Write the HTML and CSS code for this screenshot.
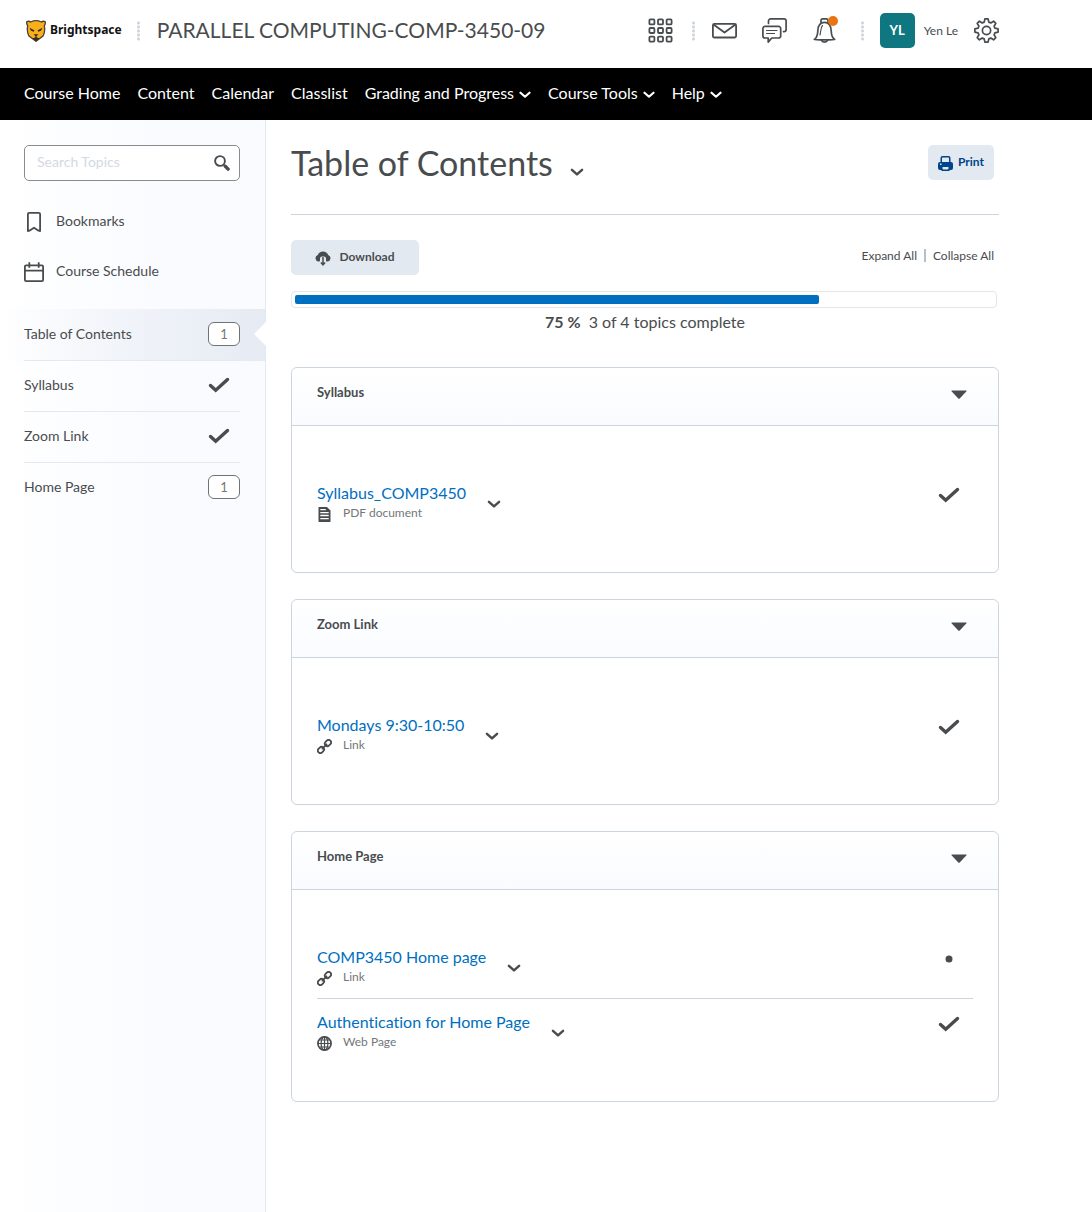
FILE: index.html
```html
<!DOCTYPE html>
<html lang="en">
<head>
<meta charset="utf-8">
<meta name="viewport" content="width=device-width, initial-scale=1">
<title>Table of Contents - PARALLEL COMPUTING-COMP-3450-09</title>
<link rel="stylesheet" href="styles.css">
</head>
<body>
<svg class="defs" aria-hidden="true">
  <symbol id="chevron" viewBox="0 0 12 8"><path d="M1.500 1.700 6 5.700l4.500-4" fill="none" stroke="currentColor" stroke-width="2.200" stroke-linecap="round" stroke-linejoin="round"/></symbol>
  <symbol id="check" viewBox="0 0 22 16"><path d="M2.500 8.500 7.700 13.200 19.500 2.500" fill="none" stroke="currentColor" stroke-width="3.400" stroke-linecap="round" stroke-linejoin="miter"/></symbol>
  <symbol id="caret" viewBox="0 0 16 10"><path d="M1.200.5h13.600c.8 0 1 .6.5 1.100L8.700 8.500a1 1 0 0 1-1.400 0L.7 1.600C.2 1.100.4.500 1.200.5Z" fill="currentColor"/></symbol>
  <symbol id="link" viewBox="0 0 16 16"><g fill="none" stroke="currentColor" stroke-width="1.900"><rect x="-3.600" y="-2.700" width="7.200" height="5.400" rx="2.700" transform="translate(4.200 11.700) rotate(-45)"/><rect x="-3.600" y="-2.700" width="7.200" height="5.400" rx="2.700" transform="translate(11.700 4.300) rotate(-45)"/><path d="M5.800 10.200l4.400-4.400" stroke-linecap="round"/></g></symbol>
</svg>

<header class="topbar">
  <div class="wrap topbar-row">
    <a class="brand" href="#">
      <svg width="20" height="22" viewBox="0 0 20 22" aria-hidden="true"><path d="M.7 1.800C2 1 3.500 1.200 4.800 2 8 .4 12 .4 15.200 2c1.300-.8 2.800-1 4.100-.2.2 1.700-.3 3-1 4 .8 4 .4 7.500-1.300 10.300L10 21.300 3 16.100C1.300 13.300.9 9.800 1.700 5.800c-.7-1-1.200-2.300-1-4Z" fill="#f9af1b" stroke="#4c4034" stroke-width="1.300"/><path d="M3.500 7.800 8.300 10.200l-.5 1.500C5.800 11.500 4.300 10.500 3.500 7.800ZM16.500 7.800 11.700 10.200l.5 1.500c2-.2 3.500-1.200 4.300-3.900ZM7.600 14.300h4.800L10 16.700ZM6.500 18.300 10 17.300l3.500 1L10 20.900Z" fill="#33291f"/><path d="M10 16v2" stroke="#33291f"/></svg>
      <span>Brightspace</span>
    </a>
    <span class="dots"></span>
    <a class="course" href="#">PARALLEL COMPUTING-COMP-3450-09</a>
    <div class="tools">
      <button type="button" class="icon" aria-label="Select a course"><svg width="25" height="25" viewBox="0 0 25 25" fill="none" stroke="currentColor" stroke-width="1.800"><rect x="1.400" y="1.400" width="5" height="5" rx="1"/><rect x="10" y="1.400" width="5" height="5" rx="1"/><rect x="18.600" y="1.400" width="5" height="5" rx="1"/><rect x="1.400" y="10" width="5" height="5" rx="1"/><rect x="10" y="10" width="5" height="5" rx="1"/><rect x="18.600" y="10" width="5" height="5" rx="1"/><rect x="1.400" y="18.600" width="5" height="5" rx="1"/><rect x="10" y="18.600" width="5" height="5" rx="1"/><rect x="18.600" y="18.600" width="5" height="5" rx="1"/></svg></button>
      <span class="dots"></span>
      <div class="alerts">
        <button type="button" class="icon" aria-label="Email"><svg width="25" height="25" viewBox="0 0 25 25" fill="none" stroke="currentColor" stroke-width="1.800" stroke-linejoin="round"><rect x=".9" y="5.900" width="23.200" height="13.600" rx="1.500"/><path d="M1.500 6.500 12.500 14.500 23.500 6.500"/></svg></button>
        <button type="button" class="icon" aria-label="Subscription alerts"><svg width="25" height="25" viewBox="0 0 25 25" fill="none" stroke="currentColor" stroke-width="1.700" stroke-linejoin="round" stroke-linecap="round"><path d="M6.500 5.500V3A2.100 2.100 0 0 1 8.600.9H22A2.100 2.100 0 0 1 24.100 3v8.500a2.100 2.100 0 0 1-2.100 2.100h-.5"/><path d="M3 8.400h13.600a2.100 2.100 0 0 1 2.100 2.100v7.400a2.100 2.100 0 0 1-2.100 2.100H9.700L6.200 24.100V20H3A2.100 2.100 0 0 1 .9 17.900v-7.400A2.100 2.100 0 0 1 3 8.400Z"/><path d="M4.500 12.500h10.500M4.500 15.500h8" stroke-width="1.200"/></svg></button>
        <button type="button" class="icon" aria-label="Update alerts"><svg width="25" height="25" viewBox="0 0 25 25" fill="none" stroke="currentColor" stroke-width="1.700" stroke-linejoin="round" stroke-linecap="round"><path d="M2.300 21.500c2.400-1.600 3.300-4 3.500-8.500C6 7.500 8.300 4.300 12.500 4.300s6.500 3.200 6.700 8.700c.2 4.500 1.100 6.900 3.500 8.500-.5.600-19.900.6-20.400 0Z"/><path d="M9 4.900V2.500A1.600 1.600 0 0 1 10.600.9h3.800A1.600 1.600 0 0 1 16 2.500v2.400M9.500 22.300c.7 2.400 5.300 2.400 6 0"/><path d="M10.500 7.500C8.600 9.500 8.900 13.500 8 17" stroke-width="1.100"/></svg><span class="unread"></span></button>
      </div>
      <span class="dots"></span>
      <button type="button" class="user"><span class="avatar">YL</span><span>Yen Le</span></button>
      <button type="button" class="icon" aria-label="Settings"><svg width="25" height="25" viewBox="0 0 25 25" fill="none" stroke="currentColor" stroke-width="1.700" stroke-linejoin="round"><path d="M10.900.9h3.200l.7 3.200 2 .8 2.800-1.700 2.200 2.200-1.700 2.800.8 2 3.200.7v3.200l-3.200.7-.8 2 1.700 2.800-2.200 2.200-2.800-1.700-2 .8-.7 3.200h-3.200l-.7-3.200-2-.8-2.800 1.700-2.200-2.200 1.700-2.800-.8-2-3.200-.7v-3.200l3.200-.7.8-2-1.700-2.800 2.200-2.200 2.800 1.700 2-.8Z"/><circle cx="12.500" cy="12.500" r="4.100"/></svg></button>
    </div>
  </div>
</header>

<nav class="navbar" aria-label="Course">
  <div class="wrap navbar-row">
    <a href="#">Course Home</a>
    <a href="#">Content</a>
    <a href="#">Calendar</a>
    <a href="#">Classlist</a>
    <button type="button">Grading and Progress <svg width="12" height="8"><use href="#chevron"/></svg></button>
    <button type="button">Course Tools <svg width="12" height="8"><use href="#chevron"/></svg></button>
    <button type="button">Help <svg width="12" height="8"><use href="#chevron"/></svg></button>
  </div>
</nav>

<div class="layout">
  <aside class="sidebar">
    <form class="search" role="search">
      <input type="text" placeholder="Search Topics" aria-label="Search Topics">
      <button type="submit" aria-label="Search"><svg width="16" height="16" viewBox="0 0 16 16" fill="none" stroke="currentColor"><circle cx="6" cy="6" r="4.900" stroke-width="1.900"/><path d="M10 10l1.500 1.500" stroke-width="2"/><path d="M11.300 11.300l2.800 2.800" stroke-width="3.400" stroke-linecap="round"/></svg></button>
    </form>
    <ul class="shortcuts">
      <li><a href="#"><svg width="20" height="20" viewBox="0 0 20 20" fill="none" stroke="currentColor" stroke-width="1.800" stroke-linejoin="round"><path d="M3.900 19V2A1.200 1.200 0 0 1 5.100.9h9.800A1.200 1.200 0 0 1 16.100 2v17l-1.500-.3L10 15.700 5.400 18.700Z"/></svg><span>Bookmarks</span></a></li>
      <li><a href="#"><svg width="20" height="20" viewBox="0 0 20 20" fill="none" stroke="currentColor" stroke-width="1.800"><rect x=".9" y="3.400" width="18.200" height="15.700" rx="1.200"/><path d="M1 8.700h18M5.300.3v5.400M14.700.3v5.400"/></svg><span>Course Schedule</span></a></li>
    </ul>
    <ul class="modules">
      <li class="active"><a href="#">Table of Contents <span class="count">1</span></a></li>
      <li><a href="#">Syllabus <svg width="22" height="16"><use href="#check"/></svg></a></li>
      <li><a href="#">Zoom Link <svg width="22" height="16"><use href="#check"/></svg></a></li>
      <li><a href="#">Home Page <span class="count">1</span></a></li>
    </ul>
  </aside>

  <main class="content">
    <div class="heading">
      <h1>Table of Contents</h1>
      <button type="button" class="menu" aria-label="Table of Contents actions"><svg width="14" height="9"><use href="#chevron"/></svg></button>
      <button type="button" class="btn print"><svg width="15" height="15" viewBox="0 0 15 15"><path d="M2.500 6V2A2 2 0 0 1 4.500 0h6a2 2 0 0 1 2 2v4h.5a2 2 0 0 1 2 2v4a2 2 0 0 1-2 2h-1a2 2 0 0 1-2 1h-5a2 2 0 0 1-2-1H2a2 2 0 0 1-2-2V8a2 2 0 0 1 2-2Z" fill="currentColor"/><path d="M4 6V2.200q0-.7.700-.7h5.600q.7 0 .7.700V6ZM4.500 11h6v1.500q0 1-1 1h-4q-1 0-1-1ZM2 7.500h1.500V9H2Z" fill="#e3e9f1"/></svg>Print</button>
    </div>

    <div class="actions">
      <button type="button" class="btn download"><svg width="16" height="15" viewBox="0 0 16 15"><path d="M3.500 10.500a3.400 3.400 0 0 1-.7-6.600C3.600 1.600 5.500.4 8 .4s4.400 1.200 5.200 3.500a3.400 3.400 0 0 1-.7 6.600H12c-.8 0-1-.5-1-1V7.500a2 2 0 0 0-2-2H7a2 2 0 0 0-2 2v2c0 .5-.2 1-1 1Z" fill="currentColor"/><path d="M8 6v7M5.900 11.500 8 13.800l2.100-2.300" fill="none" stroke="currentColor" stroke-width="1.500"/></svg>Download</button>
      <div class="toggle-all"><a href="#">Expand All</a><a href="#">Collapse All</a></div>
    </div>

    <div class="progress" role="progressbar" aria-valuenow="75" aria-valuemin="0" aria-valuemax="100" aria-label="Topics complete"><span style="width:75%"></span></div>
    <p class="summary"><strong>75 %</strong> 3 of 4 topics complete</p>

    <section class="card">
      <h2>Syllabus <button type="button" aria-label="Collapse Syllabus"><svg width="16" height="10"><use href="#caret"/></svg></button></h2>
      <ul>
        <li>
          <div class="topic"><a href="#">Syllabus_COMP3450</a><small><svg width="15" height="15" viewBox="0 0 15 15"><path d="M2.500 0h7.500l3.500 3.500V14.500a.5.500 0 0 1-.5.500H2a.5.500 0 0 1-.5-.5V.5a.5.500 0 0 1 .5-.5Z" fill="currentColor"/><path d="M3.300 2.700h5.500M3.300 5.600h8.400M3.300 8.500h8.400M3.300 11.700h8.400" stroke="#fff" stroke-width="1.300"/></svg>PDF document</small></div>
          <button type="button" class="menu" aria-label="Actions for Syllabus_COMP3450"><svg width="14" height="9"><use href="#chevron"/></svg></button>
          <svg class="status" width="22" height="16" role="img" aria-label="Completed"><use href="#check"/></svg>
        </li>
      </ul>
    </section>

    <section class="card">
      <h2>Zoom Link <button type="button" aria-label="Collapse Zoom Link"><svg width="16" height="10"><use href="#caret"/></svg></button></h2>
      <ul>
        <li>
          <div class="topic"><a href="#">Mondays 9:30-10:50</a><small><svg width="15" height="15"><use href="#link"/></svg>Link</small></div>
          <button type="button" class="menu" aria-label="Actions for Mondays 9:30-10:50"><svg width="14" height="9"><use href="#chevron"/></svg></button>
          <svg class="status" width="22" height="16" role="img" aria-label="Completed"><use href="#check"/></svg>
        </li>
      </ul>
    </section>

    <section class="card">
      <h2>Home Page <button type="button" aria-label="Collapse Home Page"><svg width="16" height="10"><use href="#caret"/></svg></button></h2>
      <ul>
        <li>
          <div class="topic"><a href="#">COMP3450 Home page</a><small><svg width="15" height="15"><use href="#link"/></svg>Link</small></div>
          <button type="button" class="menu" aria-label="Actions for COMP3450 Home page"><svg width="14" height="9"><use href="#chevron"/></svg></button>
          <svg class="status" width="22" height="16" viewBox="0 0 22 16" role="img" aria-label="Not completed"><circle cx="11" cy="8" r="3.500" fill="currentColor"/></svg>
        </li>
        <li>
          <div class="topic"><a href="#">Authentication for Home Page</a><small><svg width="15" height="15" viewBox="0 0 15 15" fill="none" stroke="currentColor" stroke-width="1.200"><circle cx="7.500" cy="7.500" r="6.600" stroke-width="1.700"/><ellipse cx="7.500" cy="7.500" rx="3.400" ry="6.600"/><path d="M7.500 1v13M1 7.500h13M2.500 4h10M2.500 11h10"/></svg>Web Page</small></div>
          <button type="button" class="menu" aria-label="Actions for Authentication for Home Page"><svg width="14" height="9"><use href="#chevron"/></svg></button>
          <svg class="status" width="22" height="16" role="img" aria-label="Completed"><use href="#check"/></svg>
        </li>
      </ul>
    </section>
  </main>
</div>
</body>
</html>
```
FILE: styles.css
```css
* { box-sizing: border-box; }

body {
  display: flex;
  flex-direction: column;
  min-height: 100vh;
  margin: 0;
  background: #fff;
  color: #494c4e;
  font: 14px/20px Lato, "Liberation Sans", sans-serif;
  font-variant-ligatures: none;
}

a { color: inherit; text-decoration: none; }
ul { margin: 0; padding: 0; list-style: none; }
svg { display: block; flex: none; }
button {
  padding: 0;
  border: 0;
  background: none;
  color: inherit;
  font: inherit;
  cursor: pointer;
}
.defs { position: absolute; width: 0; height: 0; }
.wrap { padding: 0 93px 0 24px; }

/* Top bar */
.topbar-row { display: flex; align-items: center; height: 68px; padding-bottom: 7px; }
.brand {
  display: flex;
  align-items: center;
  gap: 4px;
  margin: 0 15px 0 2px;
  color: #111;
  font: bold 12px/20px "Noto Sans", sans-serif;
}
.brand span { padding-bottom: 2px; }
.dots {
  width: 3px;
  height: 20px;
  background: radial-gradient(circle, #cdd5dc 1px, transparent 2px) 0 0 / 3px 4px;
}
.course { margin-left: 17px; padding-bottom: 2px; font-size: 21px; line-height: 26px; white-space: nowrap; }
.tools { display: flex; align-items: center; margin-left: auto; }
.tools .dots { margin: 0 17px 0 19px; }
.alerts { display: flex; gap: 25px; }
.tools .alerts + .dots { margin: 0 16px 0 24px; }
.icon { position: relative; width: 25px; height: 25px; }
.unread {
  position: absolute;
  top: -2px;
  right: -1px;
  width: 10px;
  height: 10px;
  border-radius: 50%;
  background: #e87511;
}
.user { display: flex; align-items: center; gap: 9px; margin-right: 16px; font-size: 12px; white-space: nowrap; }
.avatar {
  width: 35px;
  border-radius: 5px;
  background: #0f7780;
  color: #fff;
  font-size: 13px;
  font-weight: bold;
  line-height: 35px;
}

/* Course navigation */
.navbar { background: #000; color: #fff; }
.navbar-row {
  display: flex;
  align-items: center;
  gap: 17px;
  height: 52px;
  padding-bottom: 2px;
  font-size: 16px;
  white-space: nowrap;
}
.navbar button { display: flex; align-items: center; gap: 5px; }
.navbar svg { margin-top: 4px; }

/* Sidebar */
.layout { display: flex; flex: 1; }
.sidebar {
  flex: none;
  width: 266px;
  padding: 25px 25px 25px 24px;
  border-right: 1px solid #e3e9f1;
  background: linear-gradient(to right, #fff, #f9fbff 60%);
}
.search {
  display: flex;
  align-items: center;
  height: 36px;
  padding: 0 9px 0 12px;
  border: 1px solid #868c8f;
  border-radius: 5px;
  background: #fff;
}
.search input {
  flex: 1;
  min-width: 0;
  padding: 0 0 2px;
  border: 0;
  outline: 0;
  background: none;
  color: inherit;
  font: inherit;
}
.search input::placeholder { color: #d3d9e3; opacity: 1; }
.shortcuts { margin: 16px 0 12px; }
.shortcuts a { display: flex; align-items: center; gap: 12px; height: 50px; }
.shortcuts span { padding-bottom: 2px; }
.modules a {
  display: flex;
  align-items: center;
  justify-content: space-between;
  height: 51px;
  padding-bottom: 2px;
  border-bottom: 1px solid #e3e9f1;
}
.modules li { margin: 0 -25px 0 -24px; padding: 0 25px 0 24px; }
.modules li:last-child a { border-color: transparent; }
.modules svg { margin-right: 10px; }
.modules .active {
  position: relative;
  background: linear-gradient(to right, transparent, #e6ebf3);
}
.modules .active a { height: 52px; }
.active::after {
  content: "";
  position: absolute;
  top: 13px;
  right: -1px;
  border: solid transparent;
  border-width: 12px 12px 12px 0;
  border-right-color: #fff;
}
.count {
  width: 32px;
  height: 24px;
  border: 1px solid #6e7376;
  border-radius: 6px;
  background: #fff;
  color: #72777a;
  font-size: 13px;
  line-height: 22px;
  text-align: center;
}

/* Content */
.content { flex: 1; min-width: 0; padding: 25px 93px 48px 25px; }
.heading {
  display: flex;
  align-items: flex-start;
  padding: 0 5px 34px 0;
  border-bottom: 1px solid #ccd5de;
}
.heading h1 { margin: 0; font-size: 34px; font-weight: normal; line-height: 35px; }
.heading .menu { margin: 23px 0 0 17px; }
.btn {
  display: flex;
  align-items: center;
  justify-content: center;
  height: 35px;
  padding-bottom: 2px;
  border-radius: 5px;
  background: #e3e9f1;
  font-size: 12px;
  font-weight: bold;
}
.btn svg { margin-top: 3px; }
.print { gap: 5px; width: 66px; margin-left: auto; color: #004489; }
.download { gap: 8px; width: 128px; }
.actions { display: flex; align-items: center; justify-content: space-between; margin: 25px 5px 16px 0; }
.toggle-all { display: flex; padding-bottom: 4px; font-size: 12px; line-height: 13px; }
.toggle-all a + a { margin-left: 7px; padding-left: 7px; border-left: 2px solid #b8bfc6; }
.progress { height: 17px; margin-right: 2px; padding: 3px; border: 1px solid #e3e6ea; border-radius: 4px; }
.progress span { display: block; height: 9px; border-radius: 2px; background: #006fbf; }
.summary { margin: 4px 0 35px; font-size: 16px; text-align: center; }
.summary strong { margin-right: 4px; }

.card { margin-bottom: 26px; border: 1px solid #ccd5de; border-radius: 6px; }
.card h2 {
  display: flex;
  justify-content: space-between;
  height: 58px;
  margin: 0;
  padding: 14px 31px 0 25px;
  border-bottom: 1px solid #ccd5de;
  border-radius: 6px 6px 0 0;
  background: linear-gradient(#fff, #f9fbff);
  font-size: 13px;
  line-height: 20px;
}
.card h2 button { height: 26px; }
.card ul { padding: 44px 25px 38px; }
.card li { display: flex; align-items: flex-start; padding: 12px 0; }
.card li + li { border-top: 1px solid #ccd5de; }
.topic a { display: block; color: #006fbf; font-size: 16px; line-height: 22px; }
.topic small { display: flex; align-items: center; gap: 11px; color: #72777a; font-size: 12px; line-height: 18px; }
.topic small svg { margin-top: 2px; color: #494c4e; }
.card .menu { margin: 18px 0 0 21px; }
.status { margin: 5px 13px 0 auto; }
```
